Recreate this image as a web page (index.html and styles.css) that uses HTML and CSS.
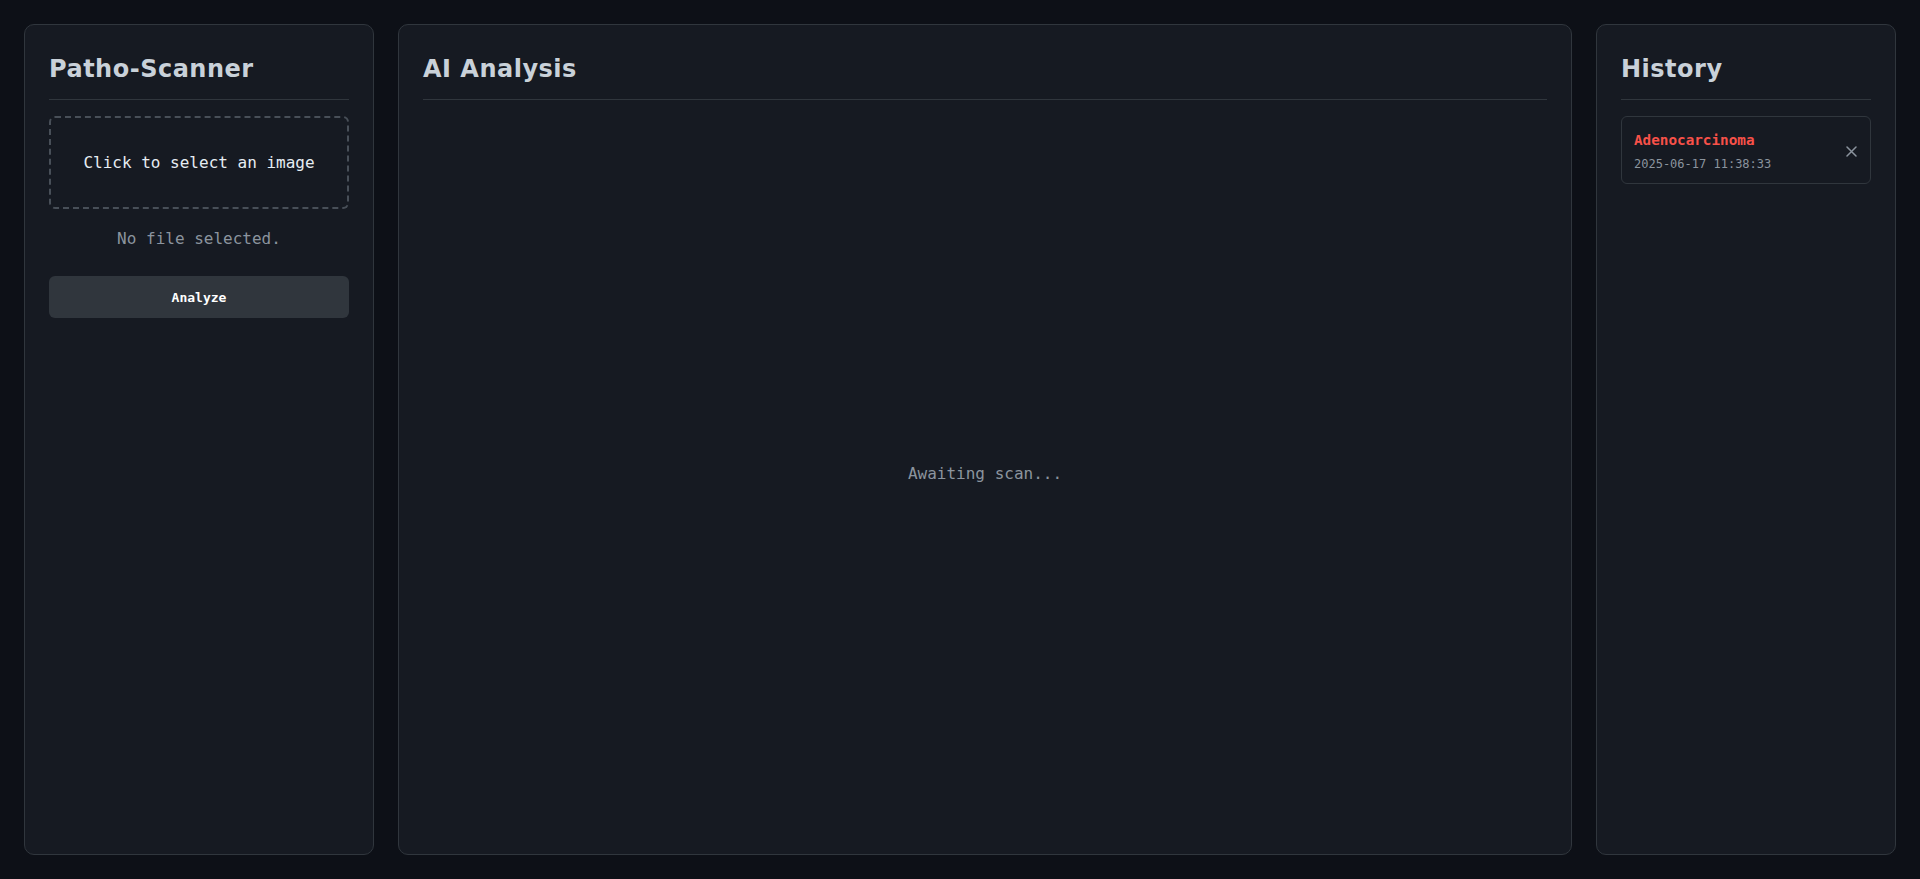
FILE: index.html
```html
<!DOCTYPE html>
<html lang="en">
<head>
  <meta charset="UTF-8">
  <meta name="viewport" content="width=device-width, initial-scale=1.0">
  <title>Patho-Scanner</title>
  <link rel="stylesheet" href="styles.css">
</head>
<body>

<div class="layout">

  <!-- Upload panel -->
  <section class="panel panel-upload">
    <h2 class="panel-title">Patho-Scanner</h2>
    <label class="dropzone">Click to select an image</label>
    <p class="file-name">No file selected.</p>
    <button class="analyze-button">Analyze</button>
  </section>

  <!-- Results panel -->
  <section class="panel panel-main">
    <h2 class="panel-title">AI Analysis</h2>
    <div class="result-area">
      <p class="placeholder">Awaiting scan...</p>
    </div>
  </section>

  <!-- History panel -->
  <section class="panel panel-history">
    <h2 class="panel-title">History</h2>
    <ul class="history-list">
      <li class="history-item">
        <div class="history-info">
          <div class="history-label">Adenocarcinoma</div>
          <div class="history-date">2025-06-17 11:38:33</div>
        </div>
        <button class="delete-button" title="Remove">
          <svg width="11" height="11" viewBox="0 0 11 11"><path d="M1 1 L10 10 M10 1 L1 10" stroke="currentColor" stroke-width="1.5" stroke-linecap="round"/></svg>
        </button>
      </li>
    </ul>
  </section>

</div>

</body>
</html>
```

FILE: styles.css
```css
/* Basic styles */
* {
  box-sizing: border-box;
}

body {
  margin: 0;
  background: #0d1017;
  color: #c9d1d9;
  font-family: "DejaVu Sans Mono", "Liberation Mono", monospace;
  height: 100vh;
  overflow: hidden;
}

/* Three column layout */
.layout {
  display: flex;
  gap: 24px;
  padding: 24px;
  height: 100%;
}

.panel {
  background: #161a22;
  border: 1px solid #30363d;
  border-radius: 10px;
  padding: 24px;
  display: flex;
  flex-direction: column;
}

.panel-upload {
  width: 350px;
  flex-shrink: 0;
}

.panel-main {
  flex: 1;
}

.panel-history {
  width: 300px;
  flex-shrink: 0;
}

/* Panel headings */
.panel-title {
  font-family: "DejaVu Sans", sans-serif;
  font-size: 24px;
  font-weight: bold;
  letter-spacing: 0.5px;
  line-height: 30px;
  color: #c9d1d9;
  margin: 0 0 16px;
  padding: 5px 0 15px;
  border-bottom: 1px solid #30363d;
}

/* Upload area */
.dropzone {
  display: block;
  border: 2px dashed #484f58;
  border-radius: 6px;
  padding: 33px 10px 32px;
  text-align: center;
  font-size: 16px;
  line-height: 24px;
  color: #e6edf3;
  cursor: pointer;
}

.file-name {
  margin: 18px 0 0;
  text-align: center;
  font-size: 16px;
  line-height: 24px;
  color: #8b949e;
}

.analyze-button {
  margin-top: 25px;
  height: 42px;
  width: 100%;
  border: none;
  border-radius: 6px;
  background: #30363d;
  color: #fff;
  font-family: "DejaVu Sans Mono", monospace;
  font-size: 13px;
  font-weight: bold;
  cursor: pointer;
}

/* Result area */
.result-area {
  flex: 1;
  display: flex;
  align-items: center;
  justify-content: center;
}

.placeholder {
  margin: 0;
  font-size: 16px;
  color: #8b949e;
}

/* History list */
.history-list {
  list-style: none;
  margin: 0;
  padding: 0;
}

.history-item {
  display: flex;
  align-items: center;
  justify-content: space-between;
  border: 1px solid #30363d;
  border-radius: 6px;
  padding: 13px 13px 10px 12px;
}

.history-label {
  font-size: 14.3px;
  font-weight: bold;
  line-height: 21px;
  color: #f85149;
}

.history-date {
  margin-top: 4px;
  font-size: 12px;
  line-height: 18px;
  color: #8b949e;
}

.delete-button {
  background: none;
  border: none;
  padding: 0;
  color: #8b949e;
  display: flex;
  cursor: pointer;
}
```
